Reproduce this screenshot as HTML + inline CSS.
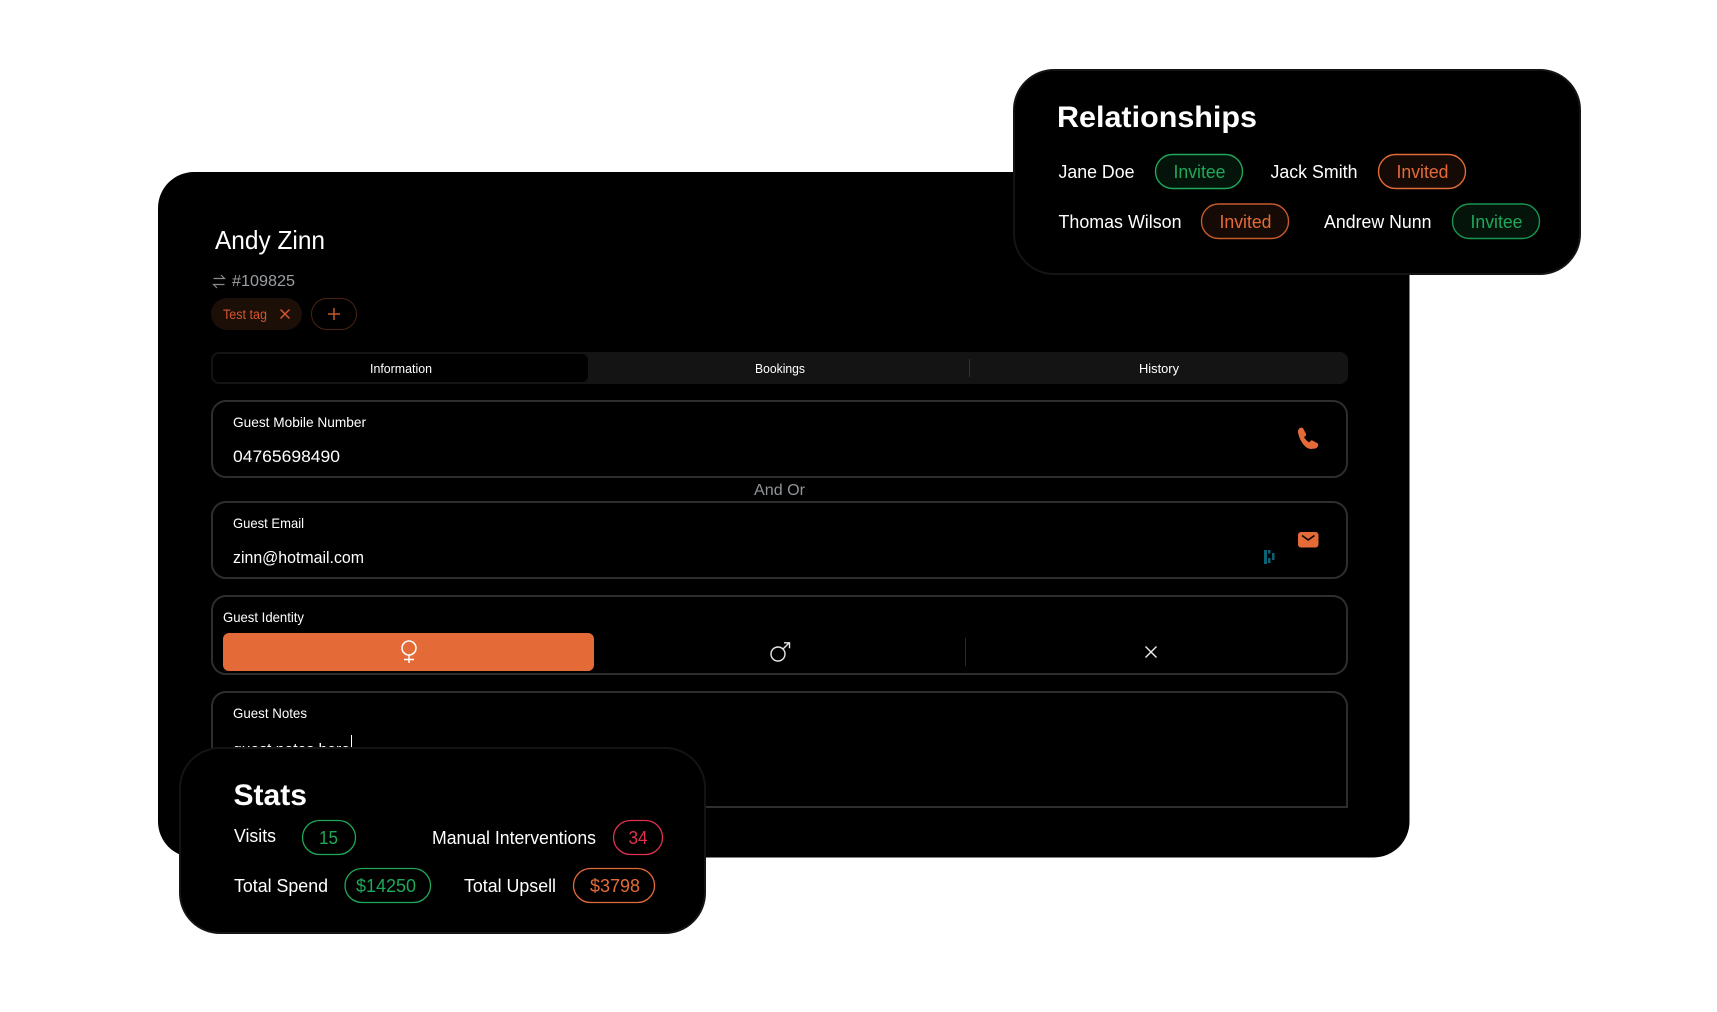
<!DOCTYPE html>
<html><head><meta charset="utf-8"><title>Andy Zinn</title>
<style>
html,body{margin:0;padding:0;background:#fff;width:1717px;height:1012px;overflow:hidden}
svg{display:block}
text{font-family:"Liberation Sans",sans-serif;fill:#fff}
.l{font-size:14px}.v{font-size:17px}.t{font-size:13px}.r{font-size:18px}
.b{font-size:30px;font-weight:bold}
.g{fill:#1fa85a}.o{fill:#e46b38}.d{fill:#e0314f}
.f{fill:#000;stroke:#2e2e2e;stroke-width:2}
</style></head><body>
<svg width="1717" height="1012" viewBox="0 0 1717 1012" xmlns="http://www.w3.org/2000/svg">
<rect width="1717" height="1012" fill="#fff"/>
<!-- main card -->
<rect x="158" y="172" width="1251.500" height="685.500" rx="36" fill="#000"/>
<text x="215" y="249" font-size="26" textLength="110" lengthAdjust="spacingAndGlyphs">Andy Zinn</text>
<g fill="none" stroke="#8a8a8a" stroke-width="1.200"><path d="M213.500 278.500h11l-3.500-3.500M224.500 284.500h-11l3.500 3.500"/></g>
<text x="232" y="286" font-size="16" style="fill:#9a9fa3" textLength="63" lengthAdjust="spacingAndGlyphs">#109825</text>
<rect x="211" y="298" width="91" height="32" rx="16" fill="#1c0f08"/>
<text x="223" y="319" font-size="13.500" style="fill:#d4562c" textLength="44" lengthAdjust="spacingAndGlyphs">Test tag</text>
<path d="M280.500 309.500l9 9M289.500 309.500l-9 9" stroke="#d4562c" stroke-width="1.500" fill="none"/>
<rect x="311.500" y="298.500" width="45" height="31" rx="15.500" fill="#000" stroke="#4a2412"/>
<path d="M328 314h12M334 308v12" stroke="#bd5a2c" stroke-width="1.500" fill="none"/>
<!-- tabs -->
<rect x="211" y="352" width="1137" height="32" rx="8" fill="#141414"/>
<rect x="213" y="354" width="375" height="28" rx="6" fill="#000"/>
<text class="t" x="370" y="373" textLength="62" lengthAdjust="spacingAndGlyphs">Information</text>
<text class="t" x="755" y="373" textLength="50" lengthAdjust="spacingAndGlyphs">Bookings</text>
<rect x="969" y="359" width="1" height="18" fill="#333"/>
<text class="t" x="1139" y="373" textLength="40" lengthAdjust="spacingAndGlyphs">History</text>
<!-- field 1 -->
<rect class="f" x="212" y="401" width="1135" height="76" rx="14"/>
<text class="l" x="233" y="427" textLength="133" lengthAdjust="spacingAndGlyphs">Guest Mobile Number</text>
<text class="v" x="233" y="462" textLength="107" lengthAdjust="spacingAndGlyphs">04765698490</text>
<path fill="#e46b38" d="M1298 432.500c-.6-2.500 1.500-5 3.800-5l1.200.6 3 5.800c.3.8 0 1.700-.7 2.200l-1.300 1c1.300 2.300 3 4 5.300 5.300l1-1.300c.6-.7 1.500-.9 2.300-.5l5 2.700.6 1.200c.2 2.500-2.200 4.500-4.700 4.100C1306.500 451 1300 442 1298 432.500z"/>
<text x="754" y="495" font-size="16" style="fill:#8f9598" textLength="51" lengthAdjust="spacingAndGlyphs">And Or</text>
<!-- field 2 -->
<rect class="f" x="212" y="502" width="1135" height="76" rx="14"/>
<text class="l" x="233" y="528" textLength="71" lengthAdjust="spacingAndGlyphs">Guest Email</text>
<text class="v" x="233" y="563" textLength="131" lengthAdjust="spacingAndGlyphs">zinn@hotmail.com</text>
<rect x="1298" y="532" width="20.500" height="15.500" rx="3" fill="#e46b38"/>
<path d="M1302 535.500l6.200 4.500 6.200-4.500" fill="none" stroke="#000" stroke-width="1.500"/>
<g fill="#0b6274"><rect x="1264" y="550" width="3" height="14"/><rect x="1268" y="550" width="2.500" height="3.500"/><rect x="1268" y="558" width="2.500" height="5"/><rect x="1272" y="553" width="2.500" height="7"/></g>
<!-- field 3 -->
<rect class="f" x="212" y="596" width="1135" height="78" rx="14"/>
<text class="l" x="223" y="622" textLength="81" lengthAdjust="spacingAndGlyphs">Guest Identity</text>
<rect x="223" y="633" width="371" height="38" rx="6" fill="#e46b38"/>
<g fill="none" stroke="#fff" stroke-width="1.500"><circle cx="409" cy="648" r="7"/><path d="M409 655v8M404 659.500h10"/></g>
<g fill="none" stroke="#e8e8e8" stroke-width="1.400"><circle cx="778" cy="654" r="7"/><path d="M783 649l6-6M784 642.800h5.500v5.500"/></g>
<rect x="965" y="638" width="1" height="28" fill="#2a2a2a"/>
<path d="M1145.500 646.500l11 11M1156.500 646.500l-11 11" fill="none" stroke="#eee" stroke-width="1.400"/>
<!-- field 4 -->
<path class="f" d="M212 807V706a14 14 0 0 1 14-14H1333a14 14 0 0 1 14 14V807Z"/>
<text class="l" x="233" y="718" textLength="74" lengthAdjust="spacingAndGlyphs">Guest Notes</text>
<text class="v" x="233" y="755" textLength="117" lengthAdjust="spacingAndGlyphs">guest notes here</text>
<rect x="351" y="735" width="1" height="13" fill="#fff"/>
<!-- relationships -->
<rect x="1014" y="70" width="566" height="204" rx="40" fill="#000" stroke="#141414" stroke-width="2"/>
<text class="b" x="1057" y="127" textLength="200" lengthAdjust="spacingAndGlyphs">Relationships</text>
<text class="r" x="1058.500" y="178" textLength="76" lengthAdjust="spacingAndGlyphs">Jane Doe</text>
<rect x="1155.500" y="154.500" width="87" height="34" rx="17" fill="#04140b" stroke="#1fa85a" stroke-width="1.400"/>
<text class="r g" x="1173.500" y="178" textLength="52" lengthAdjust="spacingAndGlyphs">Invitee</text>
<text class="r" x="1270.500" y="178" textLength="87" lengthAdjust="spacingAndGlyphs">Jack Smith</text>
<rect x="1378.500" y="154.500" width="87" height="34" rx="17" fill="#150a05" stroke="#e46b38" stroke-width="1.400"/>
<text class="r o" x="1396.500" y="178" textLength="52" lengthAdjust="spacingAndGlyphs">Invited</text>
<text class="r" x="1058.500" y="228" textLength="123" lengthAdjust="spacingAndGlyphs">Thomas Wilson</text>
<rect x="1201.500" y="204" width="87" height="34.500" rx="17" fill="#150a05" stroke="#c75a2c" stroke-width="1.400"/>
<text class="r o" x="1219.500" y="228" textLength="52" lengthAdjust="spacingAndGlyphs">Invited</text>
<text class="r" x="1324" y="228" textLength="107.500" lengthAdjust="spacingAndGlyphs">Andrew Nunn</text>
<rect x="1452.500" y="204" width="87" height="34.500" rx="17" fill="#04140b" stroke="#1a9550" stroke-width="1.400"/>
<text class="r g" x="1470.500" y="228" textLength="52" lengthAdjust="spacingAndGlyphs">Invitee</text>
<!-- stats -->
<rect x="180" y="748" width="525" height="185" rx="40" fill="#000" stroke="#141414" stroke-width="2"/>
<text class="b" x="233.500" y="805" textLength="73.500" lengthAdjust="spacingAndGlyphs">Stats</text>
<text class="r" x="234" y="842" textLength="42" lengthAdjust="spacingAndGlyphs">Visits</text>
<rect x="302.500" y="820.500" width="53" height="34" rx="17" fill="#000" stroke="#1fa85a" stroke-width="1.300"/>
<text class="r g" x="319" y="844" textLength="19" lengthAdjust="spacingAndGlyphs">15</text>
<text class="r" x="432" y="844" textLength="164" lengthAdjust="spacingAndGlyphs">Manual Interventions</text>
<rect x="613.500" y="820.500" width="49" height="34" rx="17" fill="#000" stroke="#e0314f" stroke-width="1.300"/>
<text class="r d" x="628.500" y="844" textLength="19" lengthAdjust="spacingAndGlyphs">34</text>
<text class="r" x="234" y="892" textLength="94" lengthAdjust="spacingAndGlyphs">Total Spend</text>
<rect x="345" y="868.500" width="85.500" height="34" rx="17" fill="#000" stroke="#1fa85a" stroke-width="1.300"/>
<text class="r g" x="356" y="892" textLength="60" lengthAdjust="spacingAndGlyphs">$14250</text>
<text class="r" x="464" y="892" textLength="92" lengthAdjust="spacingAndGlyphs">Total Upsell</text>
<rect x="573.500" y="868.500" width="81" height="34" rx="17" fill="#000" stroke="#e46b38" stroke-width="1.300"/>
<text class="r o" x="590" y="892" textLength="50" lengthAdjust="spacingAndGlyphs">$3798</text>
</svg>
</body></html>
